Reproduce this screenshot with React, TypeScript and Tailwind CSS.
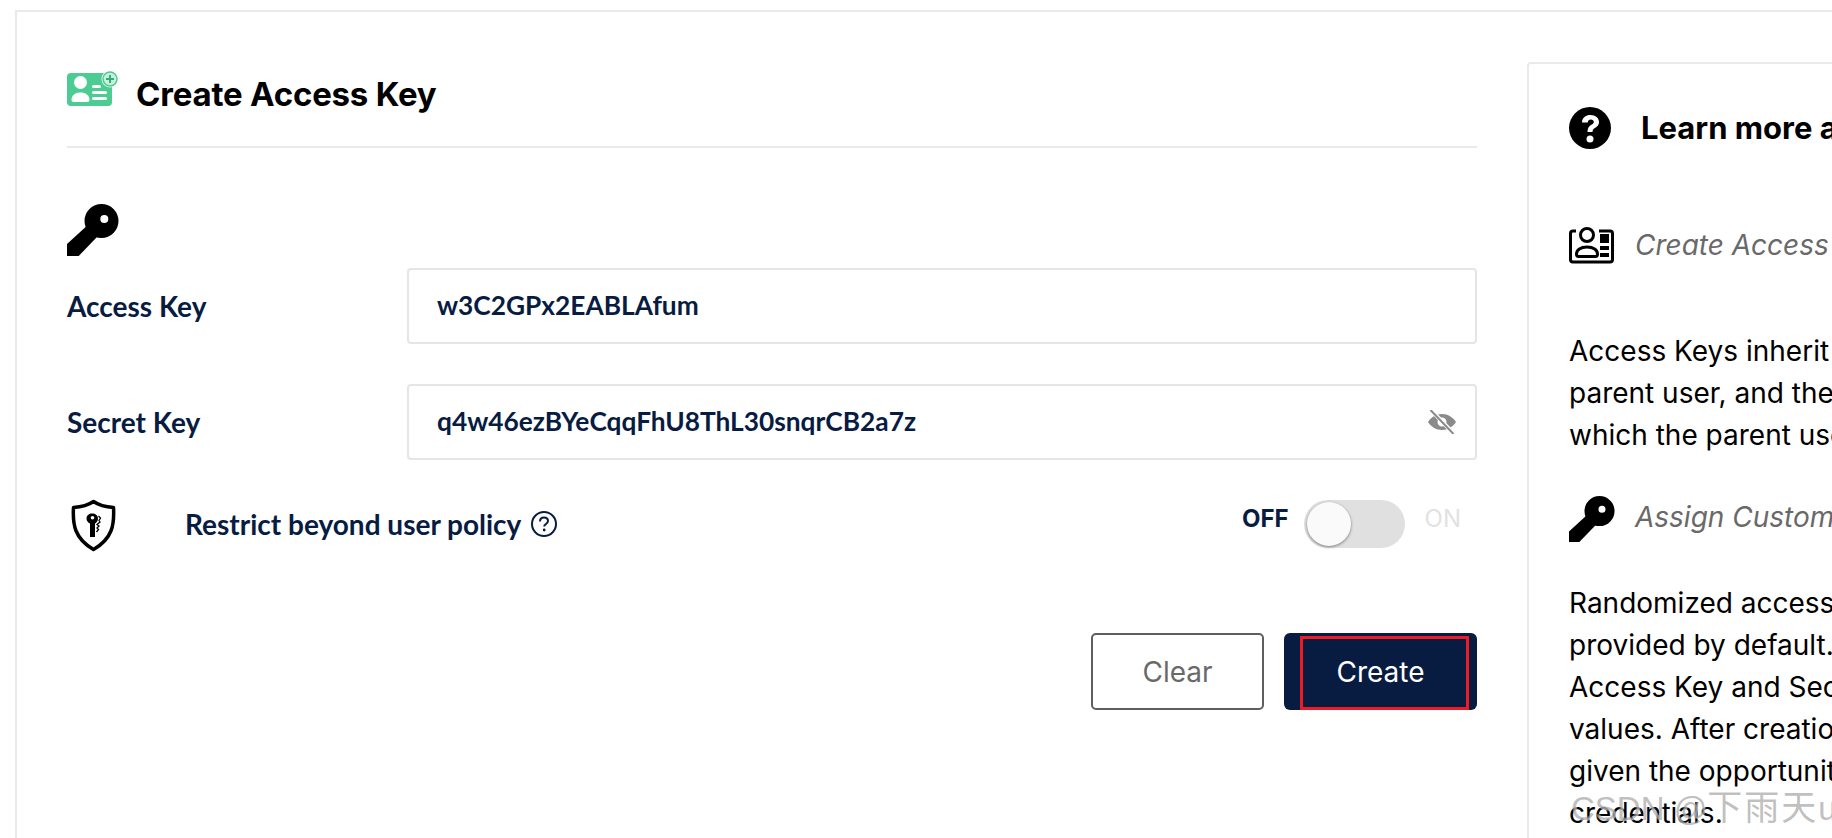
import React from "react";

const KeyIcon = ({ className }: { className: string }) => (
  <svg viewBox="0 0 52 52" className={className} fill="currentColor">
    <path fillRule="evenodd" d="M34.500 0a17 17 0 1 1 0 34 17 17 0 0 1 0-34Zm2.800 11a4 4 0 1 0 0 8 4 4 0 0 0 0-8Z" />
    <path d="M0 40 20 21.700 30 33 11.700 52H0Z" />
  </svg>
);

const TitleIcon = () => (
  <svg viewBox="0 0 52 36" className="w-[52px] h-[36px]">
    <rect x="0" y="3" width="45" height="33" rx="4" fill="#4ccb92" />
    <circle cx="13.500" cy="12.500" r="6.500" fill="#fff" />
    <path d="M4.500 30c0-5 4-7.500 9-7.500s9 2.500 9 7.500c0 1-1 2-2 2H6.500c-1 0-2-1-2-2Z" fill="#fff" />
    <rect x="25" y="15" width="9" height="3" rx="1.500" fill="#fff" />
    <rect x="25" y="21" width="15" height="3" rx="1.500" fill="#fff" />
    <rect x="25" y="27" width="15" height="3" rx="1.500" fill="#fff" />
    <circle cx="43" cy="9" r="8.500" fill="#fff" />
    <circle cx="43" cy="9" r="7" fill="#c9f0dd" stroke="#4ccb92" strokeWidth="1.500" />
    <path d="M43 5v8M39 9h8" stroke="#2fae78" strokeWidth="2" />
  </svg>
);

const ShieldIcon = () => (
  <svg viewBox="0 0 47 53" className="w-[47px] h-[53px] mt-[3px]">
    <path d="M23.500 2.500c5 3.500 12 5.500 20 6 1 17-1 31-20 42C4.500 39.500 2.500 25.500 3.500 8.500c8-.5 15-2.500 20-6Z" fill="none" stroke="#000" strokeWidth="3.500" strokeLinejoin="round" />
    <path fillRule="evenodd" d="M22 14.500c3.500 0 6 2 6 5 0 2.500-1.500 4-3 5V38h-5V24.500c-2-1-3.500-2.500-3.500-5 0-3 2.500-5 5.500-5Zm.5 2.500a1.800 1.800 0 1 0 0 3.600 1.800 1.800 0 0 0 0-3.600Z" fill="#000" />
    <path d="M28.500 17l2 2-1.500 2.500 1 1.500-3 2.500 2 1.500-2 2 1.500 1.500-2 2.500" fill="none" stroke="#000" strokeWidth="1.300" />
  </svg>
);

const HelpSolid = () => (
  <svg viewBox="0 0 42 42" className="w-[42px] h-[42px]">
    <circle cx="21" cy="21" r="21" fill="#000" />
    <path d="M13 15.500c0-5 4-7.500 8.500-7.500 5 0 8.500 3 8.500 7 0 3-1.500 4.500-4 6-2 1.200-2.500 2-2.500 4h-5c0-3.500 1-5.500 3.500-7 2-1.200 2.800-1.800 2.800-3 0-1.500-1.300-2.500-2.900-2.500-1.800 0-3 1.200-3.200 3Z" fill="#fff" />
    <circle cx="21" cy="32" r="3.500" fill="#fff" />
  </svg>
);

const CardIcon = () => (
  <svg viewBox="0 0 45 38" className="w-[45px] h-[38px]" fill="none" stroke="#000" strokeWidth="3">
    <path d="M7 5H4c-1.500 0-2.500 1-2.500 2.500v26c0 1.500 1 2.500 2.500 2.500h37c1.500 0 2.500-1 2.500-2.500v-26C43.500 6 42.500 5 41 5H30" />
    <circle cx="18" cy="9" r="6.500" />
    <path d="M7.500 28c0-4 4-7 10.500-7s10.500 3 10.500 7c0 1.500-1 2.500-2 2.500H9.500c-1 0-2-1-2-2.500Z" />
    <path d="M31 8h9v9h-9zM31 20h9v4h-9zM31 27h9v4h-9z" fill="#000" stroke="none" />
  </svg>
);

const EyeOff = () => (
  <svg viewBox="0 0 28 24" className="w-[28px] h-[24px]" fill="#8a8a8a">
    <path d="M14 4C8 4 3 7.500 0 12c3 4.500 8 8 14 8s11-3.500 14-8c-3-4.500-8-8-14-8Zm0 3.500a4.500 4.500 0 1 1 0 9 4.500 4.500 0 0 1 0-9Z" />
    <path d="M3 0l22 23" stroke="#fff" strokeWidth="4" />
    <path d="M2.500 0l23 24" stroke="#8a8a8a" strokeWidth="2" />
  </svg>
);

const HelpOutline = () => (
  <svg viewBox="0 0 26 26" className="w-[26px] h-[26px]" fill="none" stroke="#081c42" strokeWidth="2">
    <circle cx="13" cy="13" r="12" />
    <path d="M9 10.500c0-2.500 1.800-4 4-4 2.300 0 4 1.500 4 3.500 0 3-3.800 3-3.800 5.500" />
    <circle cx="13.200" cy="19" r="1.400" fill="#081c42" stroke="none" />
  </svg>
);

const FIELDS = [
  { label: "Access Key", value: "w3C2GPx2EABLAfum", secret: false },
  { label: "Secret Key", value: "q4w46ezBYeCqqFhU8ThL30snqrCB2a7z", secret: true },
];

const PARA_1 = [
  "Access Keys inherit a policy explicitly attached to the",
  "parent user, and the policies attached to each group in",
  "which the parent user has membership.",
];

const PARA_2 = [
  "Randomized access credentials are recommended, and",
  "provided by default. You may use your own custom",
  "Access Key and Secret Key by replacing the default",
  "values. After creation of any Access Key, you will be",
  "given the opportunity to view and download the account",
  "credentials.",
];

export default function App() {
  return (
    <div className="relative w-screen h-screen overflow-hidden bg-white pl-[15px] pt-[10px] font-['Inter',sans-serif]">
      <div className="flex h-[900px] w-[2200px] border-l-2 border-t-2 border-[#eaeaea] pl-[50px] pt-[58px]">
        {/* Left form */}
        <div className="w-[1410px] shrink-0">
          <div className="flex items-center h-[36px] gap-[17px]">
            <TitleIcon />
            <h1 className="mt-[14px] text-[33px] font-bold text-black tracking-[-0.2px]">Create Access Key</h1>
          </div>
          <div className="mt-[40px] border-b-2 border-[#eaeaea]" />
          <KeyIcon className="mt-[56px] w-[52px] h-[52px] text-black" />
          <div className="mt-[12px] flex flex-col gap-[40px]">
            {FIELDS.map((f) => (
              <div key={f.label} className="flex items-center">
                <label className="w-[340px] font-['Lato',sans-serif] text-[28px] font-bold text-[#081c42]">{f.label}</label>
                <div className="flex-1 h-[76px] flex items-center justify-between border-2 border-[#e5e5e5] rounded-[4px] pl-[28px] pr-[19px] font-['Lato',sans-serif] text-[26.300px] font-bold text-[#081c42]">
                  <span>{f.value}</span>
                  {f.secret && <EyeOff />}
                </div>
              </div>
            ))}
          </div>
          <div className="mt-[37px] flex items-center h-[53px] pl-[3px]">
            <ShieldIcon />
            <span className="ml-[68px] font-['Lato',sans-serif] text-[28px] font-bold text-[#081c42]">Restrict beyond user policy</span>
            <span className="ml-[10px]"><HelpOutline /></span>
            <div className="ml-auto flex items-center">
              <span className="text-[24px] font-bold text-[#081c42] -mt-[10px]">OFF</span>
              <div className="relative ml-[15px] w-[101px] h-[48px] rounded-full bg-[#e0e0e0]">
                <div className="absolute left-[3px] top-[2px] w-[44px] h-[44px] rounded-full bg-[#fafafa] shadow-[0_1px_3px_rgba(0,0,0,0.45)]" />
              </div>
              <span className="ml-[20px] mr-[16px] text-[24px] text-[#e2e2e2] -mt-[10px]">ON</span>
            </div>
          </div>
          <div className="mt-[83px] flex justify-end gap-[20px]">
            <button className="w-[173px] h-[77px] border-2 border-[#5e5e5e] rounded-[5px] text-[28px] text-[#696969]">Clear</button>
            <button className="relative w-[193px] h-[77px] rounded-[6px] bg-[#081c42] text-[28px] text-white">
              Create
              <span className="absolute left-[16px] right-[8px] top-[3px] bottom-0 border-[3px] border-[#ed1c24]" />
            </button>
          </div>
        </div>

        {/* Right help panel */}
        <div className="ml-[50px] w-[620px] h-[800px] shrink-0 -mt-[8px] border-2 border-[#eaeaea] rounded-[4px] pl-[40px] pt-[43px] text-black whitespace-nowrap">
          <div className="flex items-center h-[42px]">
            <HelpSolid />
            <h2 className="ml-[30px] text-[31px] font-bold">Learn more about Access Keys</h2>
          </div>
          <div className="mt-[77px] flex items-center h-[38px]">
            <CardIcon />
            <span className="ml-[21px] text-[28px] italic text-[#696969]">Create Access Keys</span>
          </div>
          <div className="mt-[66px] text-[28px] leading-[42px]">
            {PARA_1.map((l) => <div key={l}>{l}</div>)}
          </div>
          <div className="mt-[40px] flex items-center h-[46px]">
            <KeyIcon className="w-[46px] h-[46px] text-black" />
            <span className="ml-[20px] -mt-[4px] text-[28px] italic text-[#696969]">Assign Custom Access Policy</span>
          </div>
          <div className="mt-[40px] text-[28px] leading-[42px]">
            {PARA_2.map((l) => <div key={l}>{l}</div>)}
          </div>
        </div>
      </div>

      {/* CSDN watermark */}
      <div className="absolute left-[1571px] top-[782px] whitespace-nowrap text-[#8a8a8a]/55 font-['Liberation_Sans','Noto_Sans_CJK_SC',sans-serif] [text-shadow:1px_1px_1px_rgba(255,255,255,0.6)]">
        <span className="text-[33px]">CSDN @</span>
        <span className="text-[35px] tracking-[2px]">下雨天</span>
        <span className="text-[33px]">u</span>
      </div>
    </div>
  );
}
